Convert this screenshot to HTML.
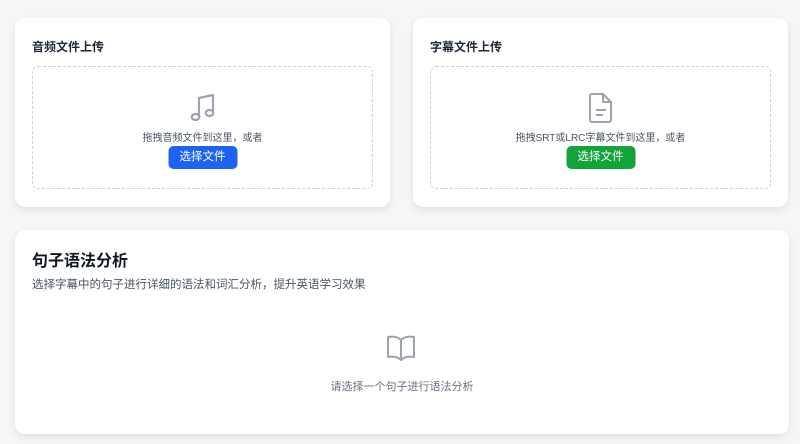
<!DOCTYPE html>
<html><head><meta charset="utf-8"><style>
*{box-sizing:border-box;margin:0;padding:0}
body{width:800px;height:444px;background:#f5f6f8;font-family:"Liberation Sans","Noto Sans CJK SC",sans-serif;position:relative;overflow:hidden}
.card{position:absolute;background:#fff;border-radius:10px;box-shadow:0 3px 8px rgba(0,0,0,.09)}
.t{position:absolute;font-size:12px;font-weight:bold;color:#1f2937}
.drop{position:absolute;border:1px dashed #cfd3d8;border-radius:6px}
.ic{position:absolute;left:50%;transform:translateX(-50%)}
.hint{position:absolute;width:100%;text-align:center;font-size:10px;color:#4b5563}
.btn{position:absolute;left:50%;transform:translateX(-50%);width:69px;height:23px;border-radius:5px;color:#fff;font-size:11.5px;text-align:center;line-height:22px}
</style></head><body>
<div class="card" style="left:15px;top:18px;width:375px;height:189px">
<div class="t" style="left:17px;top:20px">音频文件上传</div>
<div class="drop" style="left:17px;top:48px;width:341px;height:123px">
<svg class="ic" style="top:24px" width="30" height="32" viewBox="0 0 30 32" fill="none" stroke="#9ca3af" stroke-width="2.2" stroke-linejoin="round"><path d="M11 26V7l14-3v18"/><ellipse cx="7.5" cy="26" rx="3.8" ry="3"/><ellipse cx="21.5" cy="22" rx="3.8" ry="3"/></svg>
<div class="hint" style="top:62px">拖拽音频文件到这里，或者</div>
<div class="btn" style="top:79px;background:#1d63f0">选择文件</div>
</div></div>
<div class="card" style="left:413px;top:18px;width:375px;height:189px">
<div class="t" style="left:17px;top:20px">字幕文件上传</div>
<div class="drop" style="left:17px;top:48px;width:341px;height:123px">
<svg class="ic" style="top:25px" width="26" height="32" viewBox="0 0 26 32" fill="none" stroke="#9ca3af" stroke-width="2" stroke-linejoin="round"><path d="M4 2h11l8 8v18a2 2 0 0 1-2 2H4a2 2 0 0 1-2-2V4a2 2 0 0 1 2-2z"/><path d="M15 2v8h8M8 18h10M8 23h7"/></svg>
<div class="hint" style="top:62px">拖拽SRT或LRC字幕文件到这里，或者</div>
<div class="btn" style="top:79px;background:#12a33a">选择文件</div>
</div></div>
<div class="card" style="left:15px;top:230px;width:774px;height:204px">
<div style="position:absolute;left:17px;top:17px;font-size:16px;font-weight:bold;color:#111827">句子语法分析</div>
<div style="position:absolute;left:17px;top:46px;font-size:11.5px;color:#4b5563">选择字幕中的句子进行详细的语法和词汇分析，提升英语学习效果</div>
<svg style="position:absolute;left:371px;top:104px" width="30" height="28" viewBox="0 0 30 28" fill="none" stroke="#9ca3af" stroke-width="2" stroke-linejoin="round"><path d="M15 6C12 3 7 2 2 3v20c5-1 10 0 13 3 3-3 8-4 13-3V3c-5-1-10 0-13 3zM15 6v20"/></svg>
<div style="position:absolute;width:100%;top:148px;text-align:center;font-size:11px;color:#6b7280">请选择一个句子进行语法分析</div>
</div>
</body></html>
